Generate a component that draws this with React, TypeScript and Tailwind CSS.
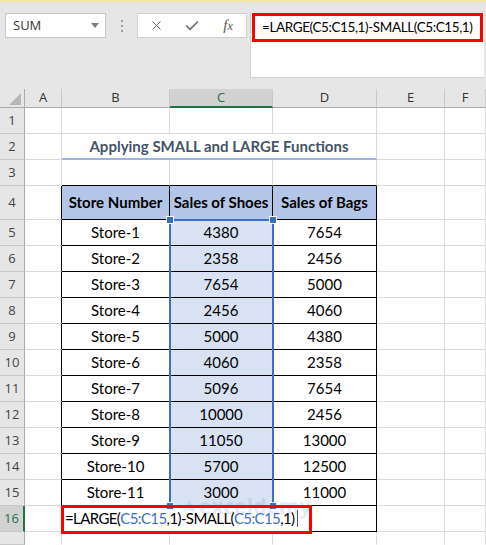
import { X, Check } from 'lucide-react';

const stores = Array.from({ length: 11 }, (_, i) => `Store-${i + 1}`);
const shoes = [4380, 2358, 7654, 2456, 5000, 4060, 5096, 10000, 11050, 5700, 3000];
const bags = [7654, 2456, 5000, 4060, 4380, 2358, 7654, 2456, 13000, 12500, 11000];
const colLetters = ['A', 'B', 'C', 'D', 'E', 'F'];

function FormulaBar() {
  return (
    <div className="h-[89px] bg-[#e6e6e6] border-t-2 border-[#f3e8a6] flex items-start pt-[11px] font-['Open_Sans',sans-serif]">
      {/* name box */}
      <div className="ml-[5px] w-[101px] h-[25px] bg-white border border-[#c6c6c6] flex items-center justify-between pl-[7px] pr-[6px] text-[13px] text-[#333]">
        <span>SUM</span>
        <span className="w-0 h-0 border-x-[4px] border-x-transparent border-t-[5px] border-t-[#808080]" />
      </div>
      <div className="ml-[15px] mt-[7px] flex flex-col gap-[3px]">
        <span className="w-[2px] h-[2px] bg-[#9a9a9a]" />
        <span className="w-[2px] h-[2px] bg-[#9a9a9a]" />
        <span className="w-[2px] h-[2px] bg-[#9a9a9a]" />
      </div>
      {/* cancel / enter / fx */}
      <div className="ml-[14px] w-[110px] h-[25px] bg-white border border-[#d0d0d0] flex items-center">
        <div className="w-[36px] flex justify-center">
          <X size={15} strokeWidth={1.6} className="text-[#6e6e6e]" />
        </div>
        <div className="w-[36px] flex justify-center">
          <Check size={16} strokeWidth={2.6} className="text-[#6e6e6e]" />
        </div>
        <div className="w-[36px] flex justify-center italic font-['Liberation_Serif',serif] text-[15px] text-[#555]">
          f<span className="text-[12px] mt-[3px]">x</span>
        </div>
      </div>
      {/* formula input */}
      <div className="ml-[3px] w-[234px] h-[65px] bg-white border-l border-b border-[#d0d0d0] pl-[1px]">
        <div className="w-[231px] h-[29px] border-[3px] border-[#ff0000] flex items-center pl-[7px] text-[13.5px] tracking-[-0.4px] text-black font-['Lato',sans-serif] whitespace-nowrap overflow-hidden">
          =LARGE(C5:C15,1)-SMALL(C5:C15,1)
        </div>
      </div>
    </div>
  );
}

function cellClass(r: number, c: number) {
  let right = 'border-r-[#dadada]';
  if ((r >= 4 && r <= 15 && c >= 1 && c <= 4) || (r === 16 && (c === 1 || c === 4))) right = 'border-r-black';
  else if (r === 16 && (c === 2 || c === 3)) right = 'border-r-white';
  let bottom = 'border-b-[#dadada]';
  if (r >= 3 && r <= 16 && c >= 2 && c <= 4) bottom = 'border-b-black';
  if (r === 17) bottom = 'border-b-transparent';
  let bg = 'bg-white';
  if (r === 4 && c >= 2 && c <= 4) bg = 'bg-[#b4c6e7]';
  else if (r >= 5 && r <= 15 && c === 3) bg = 'bg-[#d9e2f3]';
  return `border-r border-b ${right} ${bottom} ${bg} flex items-center justify-center`;
}

function cellContent(r: number, c: number) {
  if (r === 4) {
    const h = ['', '', 'Store Number', 'Sales of Shoes', 'Sales of Bags'][c];
    return h ? <span className="font-bold">{h}</span> : null;
  }
  if (r >= 5 && r <= 15) {
    const i = r - 5;
    if (c === 2) return stores[i];
    if (c === 3) return shoes[i];
    if (c === 4) return bags[i];
  }
  return null;
}

function RowHeader({ r }: { r: number }) {
  if (r === 16) {
    return (
      <div className="bg-[#d2d2d2] border-r-2 border-r-[#217346] border-b border-b-[#c8c8c8] flex items-center justify-center text-[13px] text-[#217346] font-['Open_Sans',sans-serif]">
        16
      </div>
    );
  }
  return (
    <div className="bg-[#e6e6e6] border-r border-r-[#ababab] border-b border-b-[#c8c8c8] flex items-center justify-center text-[13px] text-[#444] font-['Open_Sans',sans-serif]">
      {r < 17 ? r : ''}
    </div>
  );
}

function Sheet() {
  const rows = Array.from({ length: 17 }, (_, i) => i + 1);
  return (
    <div className="grid grid-cols-[25px_37px_108px_103px_104px_68px_41px] grid-rows-[19px_26px_26px_26px_34px_repeat(12,26px)_13px] text-[15px] text-black font-['Lato',sans-serif]">
      {/* corner */}
      <div className="bg-[#e6e6e6] border-r border-r-[#ababab] border-b border-b-[#ababab] flex items-end justify-end pr-[3px] pb-[2px]">
        <svg width="12" height="12" viewBox="0 0 12 12">
          <polygon points="12,0 12,12 0,12" fill="#b7b7b7" />
        </svg>
      </div>
      {colLetters.map((l) =>
        l === 'C' ? (
          <div
            key={l}
            className="bg-[#d2d2d2] border-r border-r-[#c8c8c8] border-b-2 border-b-[#217346] flex items-center justify-center text-[13px] text-[#217346] font-['Open_Sans',sans-serif]"
          >
            {l}
          </div>
        ) : (
          <div
            key={l}
            className="bg-[#e6e6e6] border-r border-r-[#c8c8c8] border-b border-b-[#ababab] flex items-center justify-center text-[13px] text-[#333] font-['Open_Sans',sans-serif]"
          >
            {l}
          </div>
        )
      )}
      {rows.map((r) => {
        if (r === 2) {
          return [
            <RowHeader key="h2" r={2} />,
            <div key="a2" className={cellClass(2, 1)} />,
            <div
              key="t2"
              className="col-span-3 bg-white border-b-2 border-b-[#9db2dc] border-r border-r-[#dadada] flex items-end justify-center pb-[1px] font-bold text-[#44546a]"
            >
              Applying SMALL and LARGE Functions
            </div>,
            <div key="e2" className={cellClass(2, 5)} />,
            <div key="f2" className={cellClass(2, 6)} />,
          ];
        }
        return [
          <RowHeader key={`h${r}`} r={r} />,
          ...[1, 2, 3, 4, 5, 6].map((c) =>
            r === 16 && c === 2 ? (
              <div key={`${r}-${c}`} className={`${cellClass(r, c)} !justify-start`}>
                <span className="relative z-10 pl-[3px] whitespace-nowrap flex items-center tracking-[-0.6px]">
                  =LARGE(<span className="text-[#3c6fc4]">C5:C15</span>,1)-SMALL(
                  <span className="text-[#3c6fc4]">C5:C15</span>,1)
                  <span className="ml-[2px] w-px h-[17px] bg-[#555]" />
                </span>
              </div>
            ) : (
              <div key={`${r}-${c}`} className={cellClass(r, c)}>
                {cellContent(r, c)}
              </div>
            )
          ),
        ];
      })}
    </div>
  );
}

export default function App() {
  return (
    <div className="relative w-[486px] h-[545px] overflow-hidden bg-white">
      <FormulaBar />
      <Sheet />

      {/* range highlight for C5:C15 */}
      <div className="absolute left-[169px] top-[219px] w-[105px] h-[288px] border-2 border-[#3b6fc4] pointer-events-none" />
      <div className="absolute left-[166px] top-[216px] w-[8px] h-[8px] bg-[#3b6fc4] border border-white" />
      <div className="absolute left-[269px] top-[216px] w-[8px] h-[8px] bg-[#3b6fc4] border border-white" />
      <div className="absolute left-[166px] top-[502px] w-[8px] h-[8px] bg-[#3b6fc4] border border-white" />
      <div className="absolute left-[269px] top-[502px] w-[8px] h-[8px] bg-[#3b6fc4] border border-white" />

      {/* watermark */}
      <div className="absolute left-[181px] top-[496px] flex items-center gap-[2px] opacity-15 pointer-events-none">
        <svg width="16" height="18" viewBox="0 0 16 18">
          <polygon points="8,1 15,15 8,12" fill="#5a7fbf" />
          <polygon points="8,1 1,15 8,12" fill="#8fa9d6" />
        </svg>
        <span className="text-[21px] font-bold text-[#5a7fbf] font-['Open_Sans',sans-serif] leading-none">exceldemy</span>
      </div>

      {/* red callout around formula cell */}
      <div className="absolute left-[61px] top-[505px] w-[251px] h-[29px] border-[3px] border-[#ff0000] pointer-events-none" />
    </div>
  );
}
